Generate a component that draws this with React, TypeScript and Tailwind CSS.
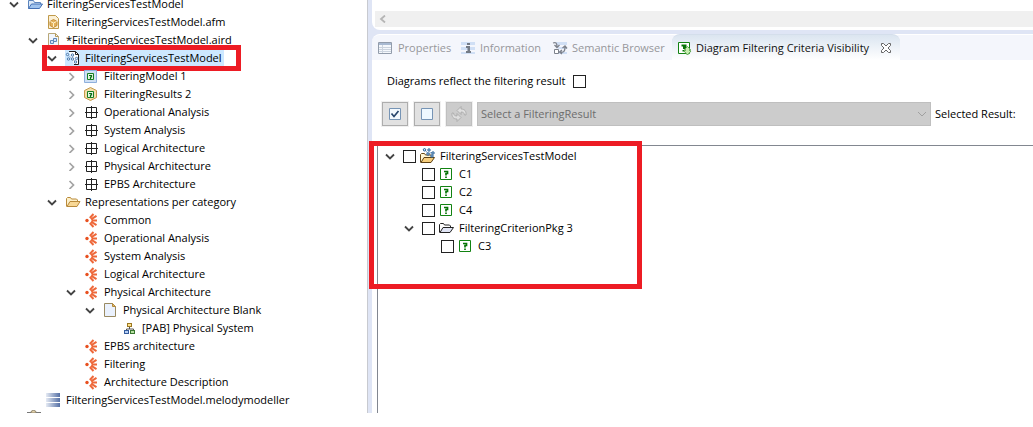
import React from "react";

type IconName =
  | "openProject" | "afm" | "aird" | "session" | "filterModel" | "filterResults" | "arch"
  | "folder" | "viewpoint" | "page" | "pab" | "melody" | "jar" | "modelFolder" | "criterion" | "pkg";

function Svg({ children, viewBox = "0 0 16 16" }: { children: React.ReactNode; viewBox?: string }) {
  return (
    <svg viewBox={viewBox} fill="none" aria-hidden="true" className="size-4 shrink-0">
      {children}
    </svg>
  );
}

function Icon({ name }: { name: IconName }) {
  switch (name) {
    case "openProject":
      return (
        <Svg>
          <path d="M1.5 12.5v-8h5l1 2h6v2" fill="#dce9f8" stroke="#5b84bd" />
          <path d="M1.5 12.5 4.5 8h11l-3 4.5z" fill="#9fc3ee" stroke="#4470b4" />
        </Svg>
      );
    case "afm":
      return (
        <Svg>
          <path d="M2.5 1.5h7l3 3v10h-10z" fill="#fbf0d6" stroke="#c09a4a" />
          <path d="m7.5 5.500 3.500 2v4l-3.500 2-3.500-2v-4z" fill="#e3b25c" stroke="#c58d35" />
          <path d="m4.500 7.500 3 1.500 3-1.500M7.500 9v4" stroke="#fff0c8" />
        </Svg>
      );
    case "aird":
      return (
        <Svg>
          <path d="M2.500 1.500h7l3 3v10h-10z" fill="#f1f6fd" stroke="#b9a878" />
          <path d="M9.500 1.500v3h3" stroke="#b99b58" />
          <path d="M4.500 8.500h3v3h-3zM7.500 6.500h3v3h-3z" fill="#d5e5f8" stroke="#5f88b8" />
        </Svg>
      );
    case "session":
      return (
        <Svg>
          <path d="M4 1.500h6.500l3 3v10H9" fill="#fff" stroke="#222" />
          <path d="M10.500 1.500v3h3" stroke="#222" />
          <path d="m2.500 5 5 4M8 5l-.5 4 3.500 3" stroke="#a9c0da" />
          <g fill="#e3f0fb" stroke="#3f6fa5" strokeWidth=".9">
            <circle cx="2.500" cy="4.500" r="1.200" /><circle cx="7.500" cy="5" r="1.200" />
            <circle cx="7.500" cy="9" r="1.200" /><circle cx="11.500" cy="8.500" r="1.200" />
            <circle cx="10.500" cy="12" r="1.200" /><circle cx="3.500" cy="9" r="1.200" />
          </g>
        </Svg>
      );
    case "filterModel":
      return (
        <Svg>
          <path d="M.5 2.500h12v12H.5z" fill="#cfe0f5" stroke="#8fb0dc" />
          <path d="M3.500 5.500h6v6h-6z" fill="#e6f5e2" stroke="#168021" />
          <path d="M5 7.500h3M7.500 7v2H6M6.500 9v2" stroke="#0b6d18" strokeWidth="1.200" />
        </Svg>
      );
    case "filterResults":
      return (
        <Svg>
          <path d="m6.500 1.500 6 3v7l-6 3-6-3v-7z" fill="#f3ddaa" stroke="#c59a4a" />
          <path d="M3.500 5.500h6v6h-6z" fill="#e6f5e2" stroke="#168021" />
          <path d="M5 7.500h3M7.500 7v2H6M6.500 9v2" stroke="#0b6d18" strokeWidth="1.200" />
        </Svg>
      );
    case "arch":
      return (
        <Svg viewBox="-1 0 16 16">
          <path d="M1.500 3.500h10v10h-10zM6.500 2v13M0 8.500h13" stroke="#222" />
        </Svg>
      );
    case "folder":
      return (
        <Svg>
          <path d="M1.500 12.500v-8l1-1h3l1 1.500h5l1 1V8" fill="#fdf0c9" stroke="#b98a3b" />
          <path d="M2 12.500 5 7.500h10l-3 5z" fill="#f8d896" stroke="#b98a3b" />
        </Svg>
      );
    case "viewpoint":
      return (
        <Svg viewBox="-1 0 16 16">
          <circle cx="2" cy="8.500" r="1.700" fill="#e8501f" />
          <path
            d="M4.800 6 8.500 2M6 7.300l5.500-3.500M6.500 8.500H12M6 9.700l5.500 3.500M4.800 11l3.700 4"
            stroke="#ee683a"
            strokeWidth="2"
          />
        </Svg>
      );
    case "page":
      return (
        <Svg viewBox="-1 0 16 16">
          <path d="M.5 1.500h8l3 3v10H.5z" fill="#eaf1fd" stroke="#9a8a62" />
          <path d="M8.500 1.500v3h3z" fill="#e5bd68" stroke="#b48a3d" />
        </Svg>
      );
    case "pab":
      return (
        <Svg viewBox="-1 0 16 16">
          <path d="M6.500 6v3M3.500 11V9h7v2" stroke="#555" />
          <rect x="4.500" y="3.500" width="4" height="3" fill="#ffe28b" stroke="#9b7722" />
          <rect x="1.500" y="10.500" width="4" height="3" fill="#b8d0f5" stroke="#345c9d" />
          <rect x="7.500" y="10.500" width="4" height="3" fill="#b7dfa2" stroke="#397631" />
        </Svg>
      );
    case "melody":
      return (
        <Svg>
          <defs>
            <linearGradient id="bar">
              <stop stopColor="#e6ebf4" />
              <stop offset="1" stopColor="#5570a5" />
            </linearGradient>
          </defs>
          <path d="M0 1h14v4H0zM0 6h14v4H0zM0 11h14v4H0z" fill="url(#bar)" />
        </Svg>
      );
    case "jar":
      return (
        <Svg>
          <path d="M4 2a2.500 1.500 0 0 1 5 0v1H4z" fill="#e6d6ae" stroke="#8c8069" />
          <path d="M0 2.500h4M9 2.500h5" stroke="#777" />
        </Svg>
      );
    case "modelFolder":
      return (
        <Svg>
          <path d="M.5 14.500v-8l1-1h3l1 1.500h6v2" fill="#fff6d5" stroke="#6b4b16" />
          <path d="m1 14.500 3-5h10.500l-3.500 5z" fill="#f7ce7c" stroke="#5d4115" />
          <path d="m5 2 3 3.500 4-1" stroke="#7c9fc4" />
          <g fill="#e5f1fc" stroke="#17548f">
            <circle cx="4.500" cy="1.800" r="1.200" /><circle cx="9" cy="2" r="1.200" />
            <circle cx="8" cy="6" r="1.200" /><circle cx="13" cy="5" r="1.200" />
            <circle cx="12" cy="8" r="1.200" />
          </g>
        </Svg>
      );
    case "criterion":
      return (
        <Svg>
          <path d="M1.500 2.500h11v11h-11z" fill="#fff" stroke="#128312" />
          <path d="M5 5.500h3.500v2H7v2M7 10.500V12" stroke="#067506" strokeWidth="1.700" />
        </Svg>
      );
    case "pkg":
      return (
        <Svg>
          <path d="M.5 12.500v-8l1-1h3l1 1.500h5l1 1V8" fill="#fff" stroke="#222" />
          <path d="M1 12.500 4 7.500h10.500l-3.500 5z" fill="#e1e5f5" stroke="#222" />
        </Svg>
      );
  }
}

function Chevron({ open }: { open: boolean }) {
  return (
    <svg viewBox="0 0 10 10" fill="none" aria-hidden="true" className="size-2.5">
      {open ? (
        <path d="m1 3.500 4 4 4-4" stroke="#444" strokeWidth="1.800" />
      ) : (
        <path d="m3.500 2 4 4-4 4" stroke="#a3a3a3" strokeWidth="1.700" />
      )}
    </svg>
  );
}

function Toggle({ state, label }: { state?: "open" | "closed"; label: string }) {
  return state ? (
    <button type="button" aria-label={`Toggle ${label}`} className="flex w-2.5 shrink-0 justify-center">
      <Chevron open={state === "open"} />
    </button>
  ) : (
    <span className="w-2.5 shrink-0" />
  );
}

type Row = { level: number; icon: IconName; label: string; state?: "open" | "closed"; selected?: boolean };

const rows: Row[] = [
  { level: 0, icon: "openProject", label: "FilteringServicesTestModel", state: "open" },
  { level: 1, icon: "afm", label: "FilteringServicesTestModel.afm" },
  { level: 1, icon: "aird", label: "*FilteringServicesTestModel.aird", state: "open" },
  { level: 2, icon: "session", label: "FilteringServicesTestModel", state: "open", selected: true },
  { level: 3, icon: "filterModel", label: "FilteringModel 1", state: "closed" },
  { level: 3, icon: "filterResults", label: "FilteringResults 2", state: "closed" },
  { level: 3, icon: "arch", label: "Operational Analysis", state: "closed" },
  { level: 3, icon: "arch", label: "System Analysis", state: "closed" },
  { level: 3, icon: "arch", label: "Logical Architecture", state: "closed" },
  { level: 3, icon: "arch", label: "Physical Architecture", state: "closed" },
  { level: 3, icon: "arch", label: "EPBS Architecture", state: "closed" },
  { level: 2, icon: "folder", label: "Representations per category", state: "open" },
  { level: 3, icon: "viewpoint", label: "Common" },
  { level: 3, icon: "viewpoint", label: "Operational Analysis" },
  { level: 3, icon: "viewpoint", label: "System Analysis" },
  { level: 3, icon: "viewpoint", label: "Logical Architecture" },
  { level: 3, icon: "viewpoint", label: "Physical Architecture", state: "open" },
  { level: 4, icon: "page", label: "Physical Architecture Blank", state: "open" },
  { level: 5, icon: "pab", label: "[PAB] Physical System" },
  { level: 3, icon: "viewpoint", label: "EPBS architecture" },
  { level: 3, icon: "viewpoint", label: "Filtering" },
  { level: 3, icon: "viewpoint", label: "Architecture Description" },
  { level: 1, icon: "melody", label: "FilteringServicesTestModel.melodymodeller" },
  { level: 0, icon: "jar", label: "" },
];

const indent = ["pl-[9px]", "pl-[28px]", "pl-[47px]", "pl-[66px]", "pl-[85px]", "pl-[104px]"];

const criteria: Row[] = [
  { level: 0, icon: "modelFolder", label: "FilteringServicesTestModel", state: "open" },
  { level: 1, icon: "criterion", label: "C1" },
  { level: 1, icon: "criterion", label: "C2" },
  { level: 1, icon: "criterion", label: "C4" },
  { level: 1, icon: "pkg", label: "FilteringCriterionPkg 3", state: "open" },
  { level: 2, icon: "criterion", label: "C3" },
];

const criteriaIndent = ["pl-[7px]", "pl-[26px]", "pl-[45px]"];

function Explorer() {
  return (
    <nav aria-label="Project explorer" className="w-[367px] shrink-0 overflow-hidden">
      <ul className="-mt-[5px]">
        {rows.map((r, i) => (
          <li key={i} className={`relative flex h-[18px] items-center gap-2 ${indent[r.level]}`}>
            <Toggle state={r.state} label={r.label} />
            <span className={`flex h-4 items-center gap-1 pr-0.5 ${r.selected ? "bg-[#cde8ff]" : ""}`}>
              <Icon name={r.icon} />
              <span>{r.label}</span>
            </span>
            {r.selected && (
              <span className="pointer-events-none absolute -inset-y-1 left-[42px] w-[199px] border-5 border-[#ed1c24]" />
            )}
          </li>
        ))}
      </ul>
    </nav>
  );
}

const box = "size-[13px] shrink-0 appearance-none border border-[#222] bg-white checked:bg-[#9fbce0]";

function Tabs() {
  const tab = "flex items-center gap-1 text-[#97979b]";
  return (
    <div role="tablist" className="flex h-[26px] shrink-0 items-stretch rounded-tl-lg border-t border-white bg-[#f4f6fc] pl-1.5">
      <button type="button" role="tab" aria-selected="false" className={`${tab} w-[82px]`}>
        <Svg>
          <path d="M.5 2.500h13v11H.5z" fill="#f5f8fc" stroke="#929cab" />
          <path d="M1 4h12" stroke="#a9bad2" strokeWidth="2" />
          <path d="M4.500 5v8M1 7.500h12M1 9.500h12M1 11.500h12" stroke="#ccd4df" />
        </Svg>
        Properties
      </button>
      <button type="button" role="tab" aria-selected="false" className={`${tab} w-[92px]`}>
        <Svg>
          <path d="M1 2h14v3H1zM1 7h14v3H1zM1 12h14v2H1z" fill="#d0dff5" />
          <path d="M7 3h3v2H7zM6 6h4v5h1v2H6v-2h1.500V8H6z" fill="#747b86" />
        </Svg>
        Information
      </button>
      <button type="button" role="tab" aria-selected="false" className={`${tab} w-[120px]`}>
        <Svg>
          <path d="M4 2h11v3H4zM6 7h9v2H6zM6 12h9v2H6z" fill="#d0dff5" />
          <path
            d="M1 3c3-1 4 0 4 4M2.500 5 5 7.500 7.500 5M8 12c4 1 5-1 5-5M10.500 8 13 6l2 2.500M10 10l-2.500 2 2.500 2"
            stroke="#7d828c"
            strokeWidth="1.300"
          />
          <path d="M2.500 9.500h4v4h-4z" fill="#fff" stroke="#7d828c" />
        </Svg>
        Semantic Browser
      </button>
      <div className="-mt-px flex w-[228px] items-center justify-between rounded-t-lg border-t border-[#d4deeb] bg-linear-to-b from-[#dbe5f0] to-white pr-2 pl-1.5">
        <button type="button" role="tab" aria-selected="true" className="flex items-center gap-0.5 text-[#111]">
          <Svg>
            <path d="M.5 2.500h11v11H.5z" fill="#fff" stroke="#128312" />
            <path d="M3.500 5.500h4v2H6v1.500M5.500 10v1.500" stroke="#067506" strokeWidth="2" />
            <path d="m9.500 6.500 3 3-1.500.5 2 1-3.500 4-3.500-4 2-1-1.500-.5z" fill="#c6eeb0" stroke="#5da650" />
          </Svg>
          Diagram Filtering Criteria Visibility
        </button>
        <button type="button" aria-label="Close tab">
          <svg viewBox="0 0 12 12" fill="none" className="size-3">
            <path
              d="M1.500 1.500h2L6 4l2.500-2.500h2v2L8 6l2.500 2.500v2h-2L6 8l-2.500 2.500h-2v-2L4 6 1.500 3.500z"
              fill="#fff"
              stroke="#666"
            />
          </svg>
        </button>
      </div>
    </div>
  );
}

function Toolbar() {
  const btn =
    "flex h-6 w-[26px] shrink-0 items-center justify-center border border-[#adadad] bg-[#e1e1e1] outline outline-[#f0f0f0]";
  return (
    <div className="flex shrink-0 items-center pl-2.5">
      <div className="flex gap-1.5">
        <button type="button" aria-label="Check all" className={btn}>
          <svg viewBox="0 0 12 12" fill="none" className="size-3">
            <path d="M.5.5h11v11H.5z" fill="#f3f9ff" stroke="#7694b5" />
            <path d="m2.500 5.500 2.500 3 4.500-5.500" stroke="#26456d" strokeWidth="1.700" />
          </svg>
        </button>
        <button type="button" aria-label="Uncheck all" className={btn}>
          <svg viewBox="0 0 12 12" fill="none" className="size-3">
            <path d="M.5.5h11v11H.5z" fill="#eef8ff" stroke="#7694b5" />
          </svg>
        </button>
        <button
          type="button"
          aria-label="Refresh"
          disabled
          className="flex h-6 w-[26px] shrink-0 items-center justify-center border border-[#bfbfbf] bg-[#cccccc] outline outline-[#f0f0f0]"
        >
          <Svg>
            <path d="M10 .5 6 4.500l4 4v-2.500c2 0 3 .5 3.500 3H15C15.500 5 13.500 3 10 3z" fill="#dedede" stroke="#a6a6a6" strokeWidth=".8" />
            <path d="M6 15.500 10 11.500l-4-4V10c-2 0-3-.5-3.500-3H1C.5 11 2.500 13 6 13z" fill="#dedede" stroke="#a6a6a6" strokeWidth=".8" />
          </Svg>
        </button>
      </div>
      <div className="relative ml-[5px] max-w-[454px] flex-1">
        <select
          aria-label="Filtering result"
          disabled
          className="block h-6 w-full appearance-none border border-[#bfbfbf] bg-[#cccccc] pl-[3px] text-[#6d6d6d] opacity-100"
        >
          <option>Select a FilteringResult</option>
        </select>
        <svg viewBox="0 0 10 10" fill="none" className="pointer-events-none absolute top-[7px] right-1 size-2.5">
          <path d="m1 3 4 4 4-4" stroke="#a0a0a0" />
        </svg>
      </div>
      <span className="ml-1 shrink-0">Selected Result:</span>
    </div>
  );
}

export default function App() {
  return (
    <div className="flex h-screen bg-white pb-3.5 font-['Open_Sans','Noto_Sans',sans-serif] text-[11px] leading-4 whitespace-nowrap text-black">
      <Explorer />
      <main className="flex min-w-0 flex-1 flex-col border-l border-[#c8cad0] bg-[#dfe5f5] pl-1">
        <div className="flex h-[30px] shrink-0 flex-col justify-end rounded-bl-lg bg-white pb-[3px] pl-[3px]">
          <div className="flex h-4 items-center bg-[#f0f0f0] pl-1">
            <svg viewBox="0 0 8 8" fill="none" className="size-2">
              <path d="M6 .5 2 4l4 3.500" stroke="#b5b5b5" strokeWidth="1.800" />
            </svg>
          </div>
        </div>
        <section className="mt-1 flex min-h-0 flex-1 flex-col">
          <Tabs />
          <div className="flex min-h-0 flex-1 flex-col bg-white">
            <label className="flex items-center gap-2 py-[13px] pl-[15px]">
              Diagrams reflect the filtering result
              <input type="checkbox" className={box} />
            </label>
            <Toolbar />
            <div className="relative mt-[19px] ml-[5px] flex-1 border-t border-l border-[#828790]">
              <ul className="pt-px">
                {criteria.map((r) => (
                  <li key={r.label} className={`flex h-[18px] items-center gap-2 ${criteriaIndent[r.level]}`}>
                    <Toggle state={r.state} label={r.label} />
                    <label className="flex items-center gap-1">
                      <input type="checkbox" className={box} />
                      <Icon name={r.icon} />
                      <span>{r.label}</span>
                    </label>
                  </li>
                ))}
              </ul>
              <span className="pointer-events-none absolute -top-[5px] -left-[9px] h-[148px] w-[273px] border-5 border-[#ed1c24]" />
            </div>
          </div>
        </section>
      </main>
    </div>
  );
}
